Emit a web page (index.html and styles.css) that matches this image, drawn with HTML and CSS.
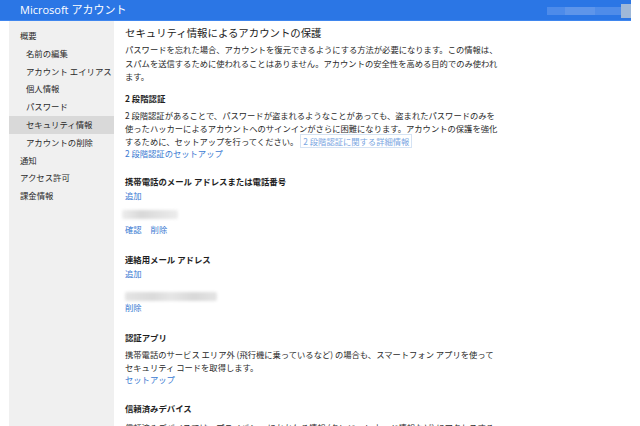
FILE: index.html
```html
<!DOCTYPE html>
<html lang="ja">
<head>
<meta charset="utf-8">
<title>Microsoft アカウント</title>
<link rel="stylesheet" href="styles.css">
</head>
<body>
<header class="topbar">
  <div class="brand">Microsoft アカウント</div>
  <div class="userblur">
    <span class="b1"></span><span class="b2"></span><span class="b3"></span><span class="b4"></span>
  </div>
</header>
<div class="layout">
  <nav class="sidebar">
    <div class="nav-item">概要</div>
    <div class="nav-item sub">名前の編集</div>
    <div class="nav-item sub">アカウント エイリアス</div>
    <div class="nav-item sub">個人情報</div>
    <div class="nav-item sub">パスワード</div>
    <div class="nav-item sub active">セキュリティ情報</div>
    <div class="nav-item sub">アカウントの削除</div>
    <div class="nav-item">通知</div>
    <div class="nav-item">アクセス許可</div>
    <div class="nav-item">課金情報</div>
  </nav>
  <main class="content">
    <h1 class="title">セキュリティ情報によるアカウントの保護</h1>
    <p class="para intro">パスワードを忘れた場合、アカウントを復元できるようにする方法が必要になります。この情報は、<br>スパムを送信するために使われることはありません。アカウントの安全性を高める目的でのみ使われ<br>ます。</p>

    <h2 class="heading h-first">2 段階認証</h2>
    <p class="para">2 段階認証があることで、パスワードが盗まれるようなことがあっても、盗まれたパスワードのみを<br>使ったハッカーによるアカウントへのサインインがさらに困難になります。アカウントの保護を強化<br>するために、セットアップを行ってください。<a class="boxlink">2 段階認証に関する詳細情報</a></p>
    <div class="link-row tight"><a class="link">2 段階認証のセットアップ</a></div>

    <h2 class="heading">携帯電話のメール アドレスまたは電話番号</h2>
    <div class="link-row"><a class="link">追加</a></div>
    <div class="blur-row"><span class="blur short"></span></div>
    <div class="link-row"><a class="link">確認</a><a class="link">削除</a></div>

    <h2 class="heading">連絡用メール アドレス</h2>
    <div class="link-row"><a class="link">追加</a></div>
    <div class="blur-row low"><span class="blur long"></span></div>
    <div class="link-row"><a class="link">削除</a></div>

    <h2 class="heading wide">認証アプリ</h2>
    <p class="para">携帯電話のサービス エリア外 (飛行機に乗っているなど) の場合も、スマートフォン アプリを使って<br>セキュリティ コードを取得します。</p>
    <div class="link-row tight"><a class="link">セットアップ</a></div>

    <h2 class="heading">信頼済みデバイス</h2>
    <p class="para last">信頼済みデバイスでは、プライバシー にかかわる情報 (クレジット カード情報など) にアクセスする</p>
  </main>
</div>
</body>
</html>
```

FILE: styles.css
```css
* { box-sizing: border-box; }
html, body {
  margin: 0;
  padding: 0;
  background: #ffffff;
  overflow: hidden;
}
body {
  width: 640px;
  height: 426px;
  font-family: "Noto Sans CJK JP", "Noto Sans", sans-serif;
  color: #2a2a2a;
}
.topbar {
  width: 631px;
  height: 21px;
  background: #2b76e5;
  display: flex;
  align-items: center;
  justify-content: space-between;
  border-bottom: 1px solid #3f86ee;
}
.brand {
  color: #ffffff;
  font-family: "Open Sans", "Noto Sans CJK JP", sans-serif;
  font-size: 11px;
  padding-left: 20px;
  line-height: 20px;
}
.userblur {
  display: flex;
  align-items: center;
  height: 21px;
  padding-top: 2px;
}
.userblur span { display: block; height: 8px; }
.userblur .b1 { width: 18px; background: #4d8bea; }
.userblur .b2 { width: 30px; background: #5e95ea; }
.userblur .b3 { width: 26px; background: #4f8ce9; }
.userblur .b4 { width: 10px; height: 14px; background: #9fb8d8; }

.layout {
  display: flex;
  margin-left: 9px;
  height: 405px;
}
.sidebar {
  width: 105px;
  flex: none;
  background: #f0f0f0;
  padding-top: 6px;
}
.nav-item {
  font-size: 8.4px;
  line-height: 17.8px;
  height: 17.8px;
  padding-left: 11px;
  color: #2a2a2a;
  white-space: nowrap;
}
.nav-item.sub { padding-left: 17px; }
.nav-item.active { background: #d9d9d9; }

.content {
  flex: 1;
  padding-left: 11px;
}
.title {
  margin: 5px 0 0;
  font-size: 10.4px;
  font-weight: normal;
  line-height: 14px;
  color: #222;
}
.para {
  margin: 4px 0 0;
  font-size: 8.3px;
  line-height: 13px;
  color: #2a2a2a;
  white-space: nowrap;
}
.intro { margin-top: 3px; line-height: 13.5px; }
.para.last { margin-top: 6px; }
.heading {
  margin: 15.7px 0 0;
  font-size: 8.4px;
  font-weight: bold;
  line-height: 14px;
  color: #1e1e1e;
}
.heading.wide { margin-top: 16.5px; }
.h-first { margin-top: 7px; }
.link-row {
  display: flex;
  gap: 9px;
  margin-top: 0;
  font-size: 8.3px;
  line-height: 14px;
}
.link-row.tight { margin: -1px 0 1px; line-height: 12px; }
.link {
  color: #3a7ad2;
  text-decoration: none;
}
.boxlink {
  color: #7aa6e2;
  border: 1px solid #d5e3f4;
  padding: 0 2px;
  margin-left: 2px;
}
.blur-row {
  height: 20px;
  display: flex;
  align-items: flex-start;
  padding-top: 8px;
}
.blur-row.low { padding-top: 12px; }
.blur {
  display: block;
  height: 9px;
  border-radius: 2px;
  filter: blur(1.5px);
}
.blur.short {
  width: 56px;
  margin-left: -3px;
  background: linear-gradient(90deg, #ececec 0%, #d8d8d8 35%, #e0e0e0 60%, #ececec 100%);
}
.blur.long {
  width: 92px;
  background: linear-gradient(90deg, #e4e4e4 0%, #dadada 30%, #e6e6e6 50%, #d8d8d8 75%, #e4e4e4 100%);
}
```
